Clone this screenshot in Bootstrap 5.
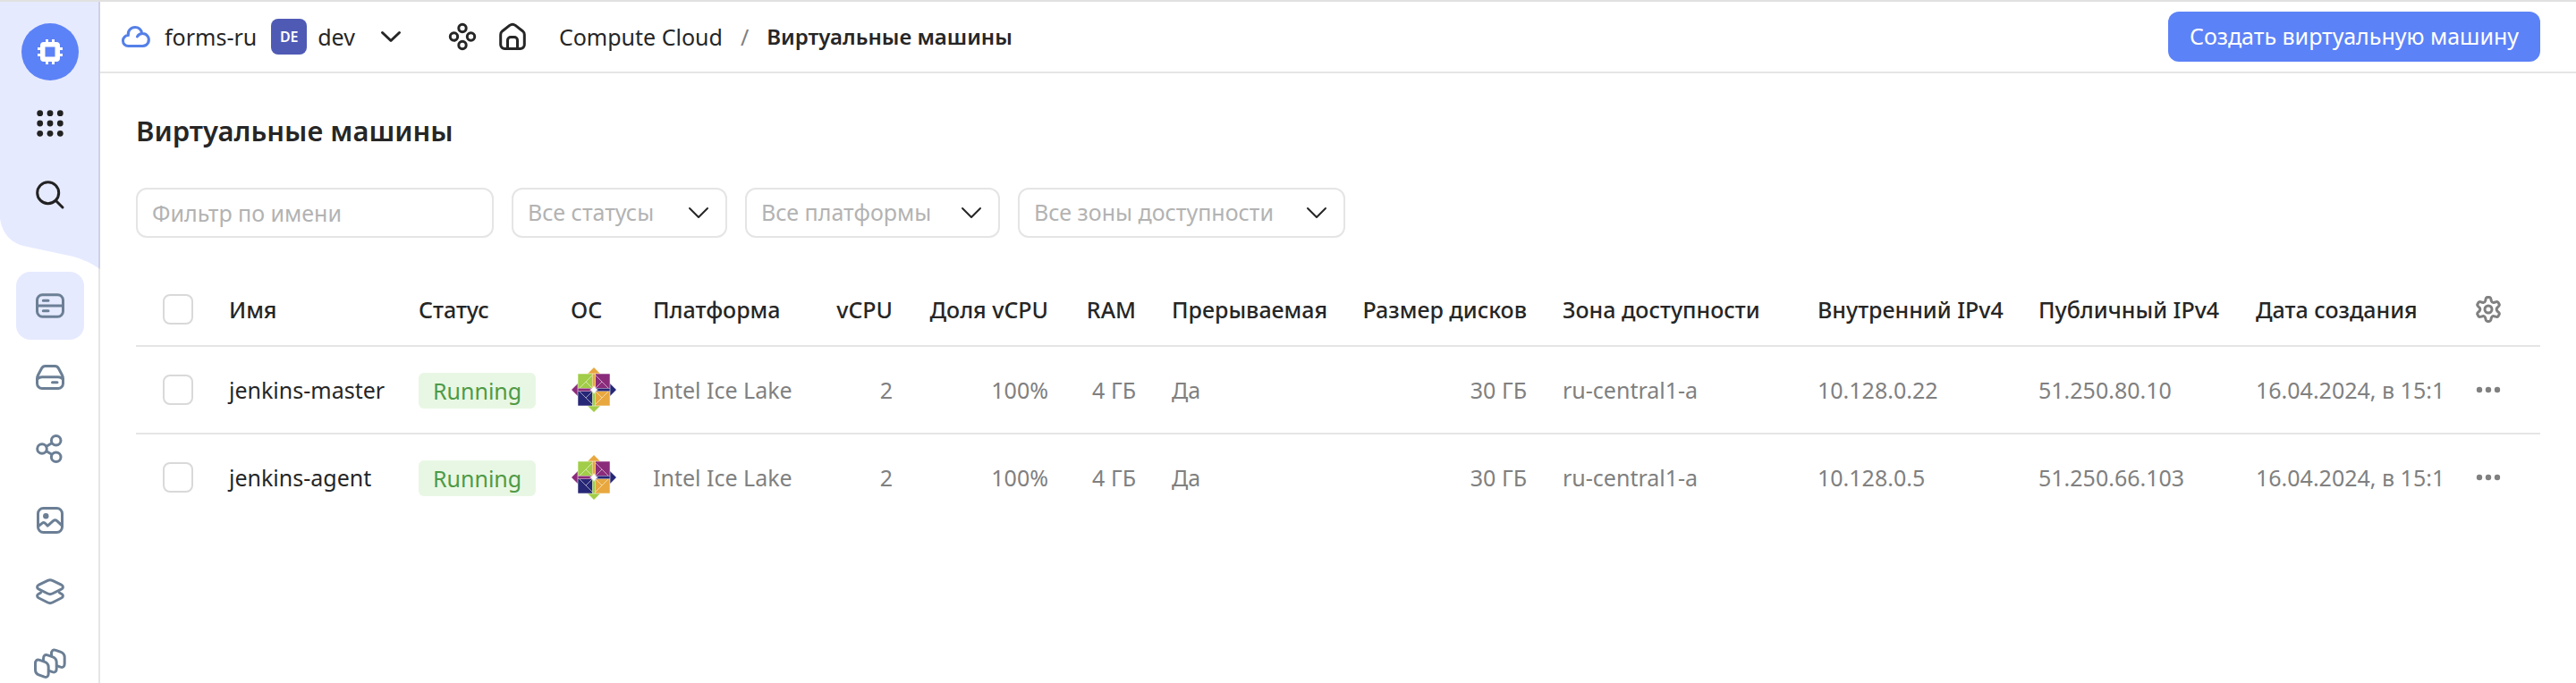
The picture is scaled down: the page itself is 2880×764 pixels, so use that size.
<!DOCTYPE html>
<html lang="ru">
<head>
<meta charset="utf-8">
<meta name="viewport" content="width=device-width, initial-scale=1">
<title>Виртуальные машины</title>
<link href="https://cdn.jsdelivr.net/npm/bootstrap@5.3.0/dist/css/bootstrap.min.css" rel="stylesheet">
<style>
  :root { --ink: #262626; --muted: #808080; --line: #e5e5e5; --brand: #5c82f7; --tint: #e6eaff; --steel: #6b7f95; }
  body { font-family: "Noto Sans", "Open Sans", sans-serif; font-size: 25px; line-height: 36px; color: var(--ink); background: #fff; }
  .app { min-height: 100vh; border-top: 2px solid #e1e1e1; }
  svg { display: block; overflow: visible; }
  .ico { width: 32px; height: 32px; fill: none; stroke: currentColor; stroke-width: 3; stroke-linecap: round; stroke-linejoin: round; }

  .side { position: relative; width: 112px; height: calc(100vh - 2px); overflow: hidden; }
  .side::after { content: ""; position: absolute; inset: 0 0 0 auto; width: 2px; background: rgba(0,0,0,.1); }
  .side-head { height: 302px; padding-top: 24px; z-index: 0; }
  .side-wave { position: absolute; top: 0; left: 0; width: 112px; height: 300px; z-index: -1; fill: var(--tint); }
  .logo { width: 64px; height: 64px; background: var(--brand); }
  .side a { color: var(--steel); border-radius: 16px; }
  .side .tool { width: 64px; height: 64px; color: #222; }
  .side .entry { width: 76px; height: 76px; }
  .side .entry.active { background: var(--tint); }

  .topbar { height: 80px; border-bottom: 2px solid var(--line); padding: 0 40px 0 24px; }
  .topbar a { color: var(--ink); }
  .avatar { width: 40px; height: 40px; border-radius: 8px; background: #4f5ab5; color: #fff; font-size: 16px; font-weight: 600; }
  .bare { display: block; border: 0; background: none; padding: 0; color: inherit; }
  .create { height: 56px; border-radius: 12px; padding: 0 24px; font-size: 25px; background: var(--brand); color: #fff; border: 0; }
  .crumbs { gap: 20px; margin-left: 36px; }
  .crumb-now { font-size: 24px; font-weight: 600; }

  .page { padding: 40px 40px 0; }
  h1 { font-size: 31px; line-height: 48px; font-weight: 600; margin: 0 0 40px; }
  .page .form-control, .page .form-select { height: 56px; border: 2px solid var(--line); border-radius: 12px; font-size: 25px; padding: 0 16px; color: #b3b3b3; flex: none; }
  .page .form-control::placeholder { color: #b3b3b3; }
  .page .form-select { background-image: url("data:image/svg+xml,%3Csvg xmlns='http://www.w3.org/2000/svg' viewBox='0 0 24 24' fill='none' stroke='%23262626' stroke-width='2' stroke-linecap='round' stroke-linejoin='round'%3E%3Cpath d='M2 7l10 10 10-10'/%3E%3C/svg%3E"); background-size: 24px 24px; background-position: right 18px center; }
  .filters { gap: 20px; }
  .f-name { width: 400px; } .f-status { width: 241px; } .f-platform { width: 285px; } .f-zone { width: 366px; }

  .vms { table-layout: fixed; border-collapse: separate; border-spacing: 0; min-width: 2400px; margin: 0; color: var(--muted); --bs-table-bg: transparent; }
  .vms th, .vms td { padding: 0 20px; height: 98px; vertical-align: middle; white-space: nowrap; border-bottom: 2px solid var(--line); color: var(--muted); }
  .vms thead th { height: 82px; font-weight: 500; color: var(--ink); }
  .vms tbody tr:last-child td { border-bottom-color: transparent; }
  .vms .pick { padding-left: 30px; }
  .vms .acts { padding-left: 12px; }
  .vms .form-check-input { display: block; width: 34px; height: 34px; margin: 0; border: 2px solid #d9d9d9; border-radius: 8px; }
  .vms a { color: var(--ink); }
  .state { display: inline-block; height: 40px; line-height: 40px; padding: 0 16px; border-radius: 6px; background: #e8f7e4; color: #4f9a45; vertical-align: middle; }
</style>
</head>
<body>
<svg width="0" height="0" class="position-absolute" aria-hidden="true">
  <symbol id="dots" viewBox="0 0 32 32"><g fill="currentColor" stroke="none"><circle cx="6" cy="16" r="3.200"/><circle cx="16" cy="16" r="3.200"/><circle cx="26" cy="16" r="3.200"/></g></symbol>
  <symbol id="centos" viewBox="-26 -26 52 52">
    <path fill="#a2cd48" d="M-18-18H-1V-1H-18z"/><path fill="#8b2c7b" d="M1-18H18V-1H1z"/>
    <path fill="#272777" d="M-18 1H-1V18H-18z"/><path fill="#e8a83f" d="M1 1H18V18H1z"/>
    <path stroke="#fff" stroke-opacity=".8" stroke-width="4" d="M0-18V18M-18 0H18"/>
    <path fill="#e8a83f" d="M0-25L7-18H1.500V-2H-1.500V-18H-7z"/><path fill="#272777" d="M25 0L18 7V1.500H2V-1.500H18V-7z"/>
    <path fill="#a2cd48" d="M0 25L-7 18H-1.500V2H1.500V18H7z"/><path fill="#8b2c7b" d="M-25 0L-18-7V-1.500H-2V1.500H-18V7z"/>
    <g stroke="#fff" stroke-opacity=".55" stroke-width="1" fill="none"><path d="M-18-18H18V18H-18z"/><path d="M-2-2L-9-9-2-16M2-2L9-9 2-16M-2 2L-9 9-2 16M2 2L9 9 2 16M-9-9L-16-2M-9 9L-16 2M9-9L16-2M9 9L16 2"/></g>
    <path fill="#fff" d="M0-5L1.500-1.500 5 0 1.500 1.500 0 5-1.500 1.500-5 0-1.500-1.500z"/><circle r="2.600" fill="#fff"/>
  </symbol>
</svg>

<div class="app d-flex">
  <nav class="side flex-shrink-0" aria-label="Сервис">
    <div class="side-head position-relative d-flex flex-column align-items-center">
      <svg class="side-wave" viewBox="0 0 112 300" aria-hidden="true"><path d="M0 0H112V299Q97 289 82 285L26 273Q4 267 0 243z"/></svg>
      <a href="#" class="logo rounded-circle d-flex align-items-center justify-content-center mb-2" aria-label="Compute Cloud">
        <svg width="28" height="28" viewBox="0 0 28 28"><path fill="#fff" fill-rule="evenodd" d="M9 0h3v3h4V0h3v3h2a4 4 0 0 1 4 4v2h3v3h-3v4h3v3h-3v2a4 4 0 0 1-4 4h-2v3h-3v-3h-4v3H9v-3H7a4 4 0 0 1-4-4v-2H0v-3h3v-4H0V9h3V7a4 4 0 0 1 4-4h2zM8.500 8.500v11h11v-11z"/></svg>
      </a>
      <a href="#" class="tool d-flex align-items-center justify-content-center mt-2 mb-3" aria-label="Все сервисы">
        <svg width="32" height="32" viewBox="0 0 32 32" fill="currentColor"><circle cx="4.700" cy="4.700" r="3.400"/><circle cx="16" cy="4.700" r="3.400"/><circle cx="27.300" cy="4.700" r="3.400"/><circle cx="4.700" cy="16" r="3.400"/><circle cx="16" cy="16" r="3.400"/><circle cx="27.300" cy="16" r="3.400"/><circle cx="4.700" cy="27.300" r="3.400"/><circle cx="16" cy="27.300" r="3.400"/><circle cx="27.300" cy="27.300" r="3.400"/></svg>
      </a>
      <a href="#" class="tool d-flex align-items-center justify-content-center" aria-label="Поиск">
        <svg class="ico" viewBox="0 0 32 32"><circle cx="13.700" cy="13.700" r="12"/><path d="M22.500 22.500L30 30"/></svg>
      </a>
    </div>
    <div class="d-flex flex-column align-items-center gap-1">
      <a href="#" class="entry active d-flex flex-shrink-0 align-items-center justify-content-center" aria-label="Виртуальные машины">
        <svg class="ico" viewBox="0 0 32 32"><rect x="1.500" y="3.800" width="29" height="24.400" rx="6"/><path d="M2 16H30M8.300 10.300H14M8.300 21.700H14"/></svg>
      </a>
      <a href="#" class="entry d-flex flex-shrink-0 align-items-center justify-content-center" aria-label="Диски">
        <svg class="ico" viewBox="0 0 32 32"><path d="M10.500 3.500h11c1.700 0 3 .8 3.800 2.300l4 7.500c.8 1.500 1.200 2.700 1.200 4.200v5.500a5.500 5.500 0 0 1-5.500 5.500H7a5.500 5.500 0 0 1-5.500-5.500v-5.500c0-1.500.4-2.700 1.200-4.200l4-7.500c.8-1.500 2.100-2.300 3.800-2.300zM2 18c1-1.500 2.500-2.300 5-2.300h18c2.500 0 4 .8 5 2.300M18.500 21.700h5.500"/></svg>
      </a>
      <a href="#" class="entry d-flex flex-shrink-0 align-items-center justify-content-center" aria-label="Группы размещения">
        <svg class="ico" viewBox="0 0 32 32"><circle cx="7" cy="16" r="5.300"/><circle cx="22.700" cy="6.700" r="5.300"/><circle cx="22.700" cy="25.300" r="5.300"/><path d="M12 13.200L17.800 9.800M12 18.800L17.800 22.200"/></svg>
      </a>
      <a href="#" class="entry d-flex flex-shrink-0 align-items-center justify-content-center" aria-label="Образы">
        <svg class="ico" viewBox="0 0 32 32"><rect x="2.500" y="2.500" width="27" height="27" rx="6"/><circle cx="11.300" cy="11.300" r="3.200" fill="currentColor" stroke="none"/><path d="M3 22.500L7 19.300c1.300-1 2.700-.9 3.700.2l2.600 2.700 6.200-5.500c1.400-1.200 3-1.200 4.200 0l5.300 5"/></svg>
      </a>
      <a href="#" class="entry d-flex flex-shrink-0 align-items-center justify-content-center" aria-label="Снимки дисков">
        <svg class="ico" viewBox="0 0 32 32"><path d="M13.400 3.400L3.500 8.200c-2.600 1.300-2.600 3.700 0 5L13.400 18c1.800.9 3.400.9 5.200 0l9.900-4.800c2.600-1.300 2.600-3.700 0-5L18.600 3.400c-1.800-.8-3.400-.8-5.200 0zM5.500 17l-2 1.200c-2.600 1.300-2.600 3.500 0 4.800l9.900 5c1.800.9 3.400.9 5.200 0l9.900-5c2.600-1.300 2.600-3.500 0-4.800l-2-1.200"/></svg>
      </a>
      <a href="#" class="entry d-flex flex-shrink-0 align-items-center justify-content-center" aria-label="Группы виртуальных машин">
        <svg class="ico" viewBox="0 0 32 32"><defs><path id="pane" fill="#fff" d="M-.5 16.500c0-3.800 1.800-5.200 4.800-4.200l5.200 1.800c3 1.100 4.700 3.200 4.700 6.100v7.400c0 3.200-1.800 4.400-4.600 3.500l-5.600-2c-2.900-1-4.500-3.100-4.500-5.900z"/></defs><use href="#pane" x="18" y="-11"/><use href="#pane" x="9" y="-5.500"/><use href="#pane"/></svg>
      </a>
    </div>
  </nav>

  <div class="flex-grow-1 overflow-hidden">
    <header class="topbar d-flex align-items-center">
      <a href="#" class="d-flex align-items-center text-decoration-none gap-3">
        <svg class="ico" style="color:#5580e8" viewBox="0 0 32 32"><path d="M7.400 14.600A6 6 0 0 0 7.500 26.600H23.600A7 7 0 1 0 17.400 16M7.400 14.600C6.500 9.500 10.500 5.400 15 5.400c3.800 0 7 2.600 7.600 6.800"/></svg>
        <span>forms-ru</span>
      </a>
      <button type="button" class="bare d-flex align-items-center ms-3">
        <span class="avatar d-flex align-items-center justify-content-center me-2">DE</span>
        <span class="ms-1">dev</span>
        <svg class="ico ms-4" viewBox="0 0 32 32"><path d="M6.500 11.500L16 20.500l9.500-9"/></svg>
      </button>
      <a href="#" class="ms-5" aria-label="Ресурсы"><svg class="ico" viewBox="0 0 32 32"><circle cx="16" cy="6.500" r="4.200"/><circle cx="6.500" cy="16" r="4.200"/><circle cx="25.500" cy="16" r="4.200"/><circle cx="16" cy="25.500" r="4.200"/></svg></a>
      <a href="#" class="ms-4" aria-label="Главная"><svg class="ico" viewBox="0 0 32 32"><path d="M2.700 13.800c0-1.700.7-3 2-4.100l8.100-6.300c2-1.500 4.400-1.500 6.400 0l8.100 6.300c1.300 1.100 2 2.400 2 4.100V25a4.500 4.500 0 0 1-4.500 4.500H7.200A4.500 4.500 0 0 1 2.700 25zM10.500 29v-9a3.500 3.500 0 0 1 3.500-3.500h4a3.500 3.500 0 0 1 3.500 3.500V29"/></svg></a>
      <nav class="crumbs d-flex align-items-center" aria-label="Навигация">
        <a href="#" class="text-decoration-none">Compute Cloud</a>
        <span style="color:#808080">/</span>
        <span class="crumb-now">Виртуальные машины</span>
      </nav>
      <button type="button" class="btn create ms-auto">Создать виртуальную машину</button>
    </header>

    <main class="page">
      <h1>Виртуальные машины</h1>
      <form class="d-flex filters mb-4">
        <input type="text" class="form-control f-name" placeholder="Фильтр по имени" aria-label="Фильтр по имени">
        <select class="form-select f-status" aria-label="Статус"><option>Все статусы</option></select>
        <select class="form-select f-platform" aria-label="Платформа"><option>Все платформы</option></select>
        <select class="form-select f-zone" aria-label="Зона доступности"><option>Все зоны доступности</option></select>
      </form>
      <div class="pt-3">
      <table class="table vms">
        <colgroup><col style="width:84px"><col style="width:212px"><col style="width:170px"><col style="width:92px"><col style="width:190px"><col style="width:118px"><col style="width:174px"><col style="width:98px"><col style="width:213px"><col style="width:224px"><col style="width:285px"><col style="width:247px"><col style="width:243px"><col style="width:252px"><col style="width:86px"></colgroup>
        <thead><tr>
          <th class="pick"><input type="checkbox" class="form-check-input" aria-label="Выбрать все"></th>
          <th>Имя</th><th>Статус</th><th>ОС</th><th>Платформа</th><th class="text-end">vCPU</th><th class="text-end">Доля vCPU</th><th class="text-end">RAM</th><th>Прерываемая</th><th class="text-end">Размер дисков</th><th>Зона доступности</th><th>Внутренний IPv4</th><th>Публичный IPv4</th><th>Дата создания</th>
          <th class="acts"><button type="button" class="bare" aria-label="Настройки таблицы"><svg class="ico" style="color:#808080" viewBox="-16 -16 32 32"><path d="M-3.400-9.400C-2.800-11-3.200-13.400-1-13.400H1C3.200-13.400 2.800-11 3.400-9.400 4.200-7.500 5.400-7.300 6.440-7.640 8.300-7.900 9.700-9.700 11.100-7.600L12.100-5.800C13.200-3.900 10.900-3.200 9.840-1.760 9-.6 9 .6 9.840 1.760 10.900 3.200 13.200 3.900 12.100 5.800L11.100 7.600C9.700 9.700 8.300 7.900 6.440 7.640 5.400 7.300 4.200 7.500 3.400 9.400 2.800 11 3.200 13.400 1 13.400H-1C-3.200 13.400-2.800 11-3.400 9.400-4.200 7.500-5.400 7.300-6.440 7.640-8.300 7.900-9.700 9.700-11.100 7.600L-12.100 5.800C-13.200 3.900-10.900 3.200-9.840 1.760-9 .6-9-.6-9.840-1.760-10.900-3.200-13.200-3.900-12.100-5.800L-11.100-7.600C-9.700-9.700-8.300-7.900-6.440-7.640-5.400-7.300-4.200-7.500-3.400-9.400z"/><circle r="4"/></svg></button></th>
        </tr></thead>
        <tbody>
          <tr>
            <td class="pick"><input type="checkbox" class="form-check-input" aria-label="jenkins-master"></td>
            <td><a href="#" class="text-decoration-none">jenkins-master</a></td><td><span class="state">Running</span></td>
            <td><svg width="52" height="52" role="img" aria-label="CentOS"><use href="#centos"/></svg></td>
            <td>Intel Ice Lake</td><td class="text-end">2</td><td class="text-end">100%</td><td class="text-end">4 ГБ</td><td>Да</td><td class="text-end">30 ГБ</td><td>ru-central1-a</td><td>10.128.0.22</td><td>51.250.80.10</td><td>16.04.2024, в 15:1</td>
            <td class="acts"><button type="button" class="bare" aria-label="Действия"><svg class="ico" style="color:#808080"><use href="#dots"/></svg></button></td>
          </tr>
          <tr>
            <td class="pick"><input type="checkbox" class="form-check-input" aria-label="jenkins-agent"></td>
            <td><a href="#" class="text-decoration-none">jenkins-agent</a></td><td><span class="state">Running</span></td>
            <td><svg width="52" height="52" role="img" aria-label="CentOS"><use href="#centos"/></svg></td>
            <td>Intel Ice Lake</td><td class="text-end">2</td><td class="text-end">100%</td><td class="text-end">4 ГБ</td><td>Да</td><td class="text-end">30 ГБ</td><td>ru-central1-a</td><td>10.128.0.5</td><td>51.250.66.103</td><td>16.04.2024, в 15:1</td>
            <td class="acts"><button type="button" class="bare" aria-label="Действия"><svg class="ico" style="color:#808080"><use href="#dots"/></svg></button></td>
          </tr>
        </tbody>
      </table>
      </div>
    </main>
  </div>
</div>
<script src="https://cdn.jsdelivr.net/npm/bootstrap@5.3.0/dist/js/bootstrap.bundle.min.js"></script>
</body>
</html>
